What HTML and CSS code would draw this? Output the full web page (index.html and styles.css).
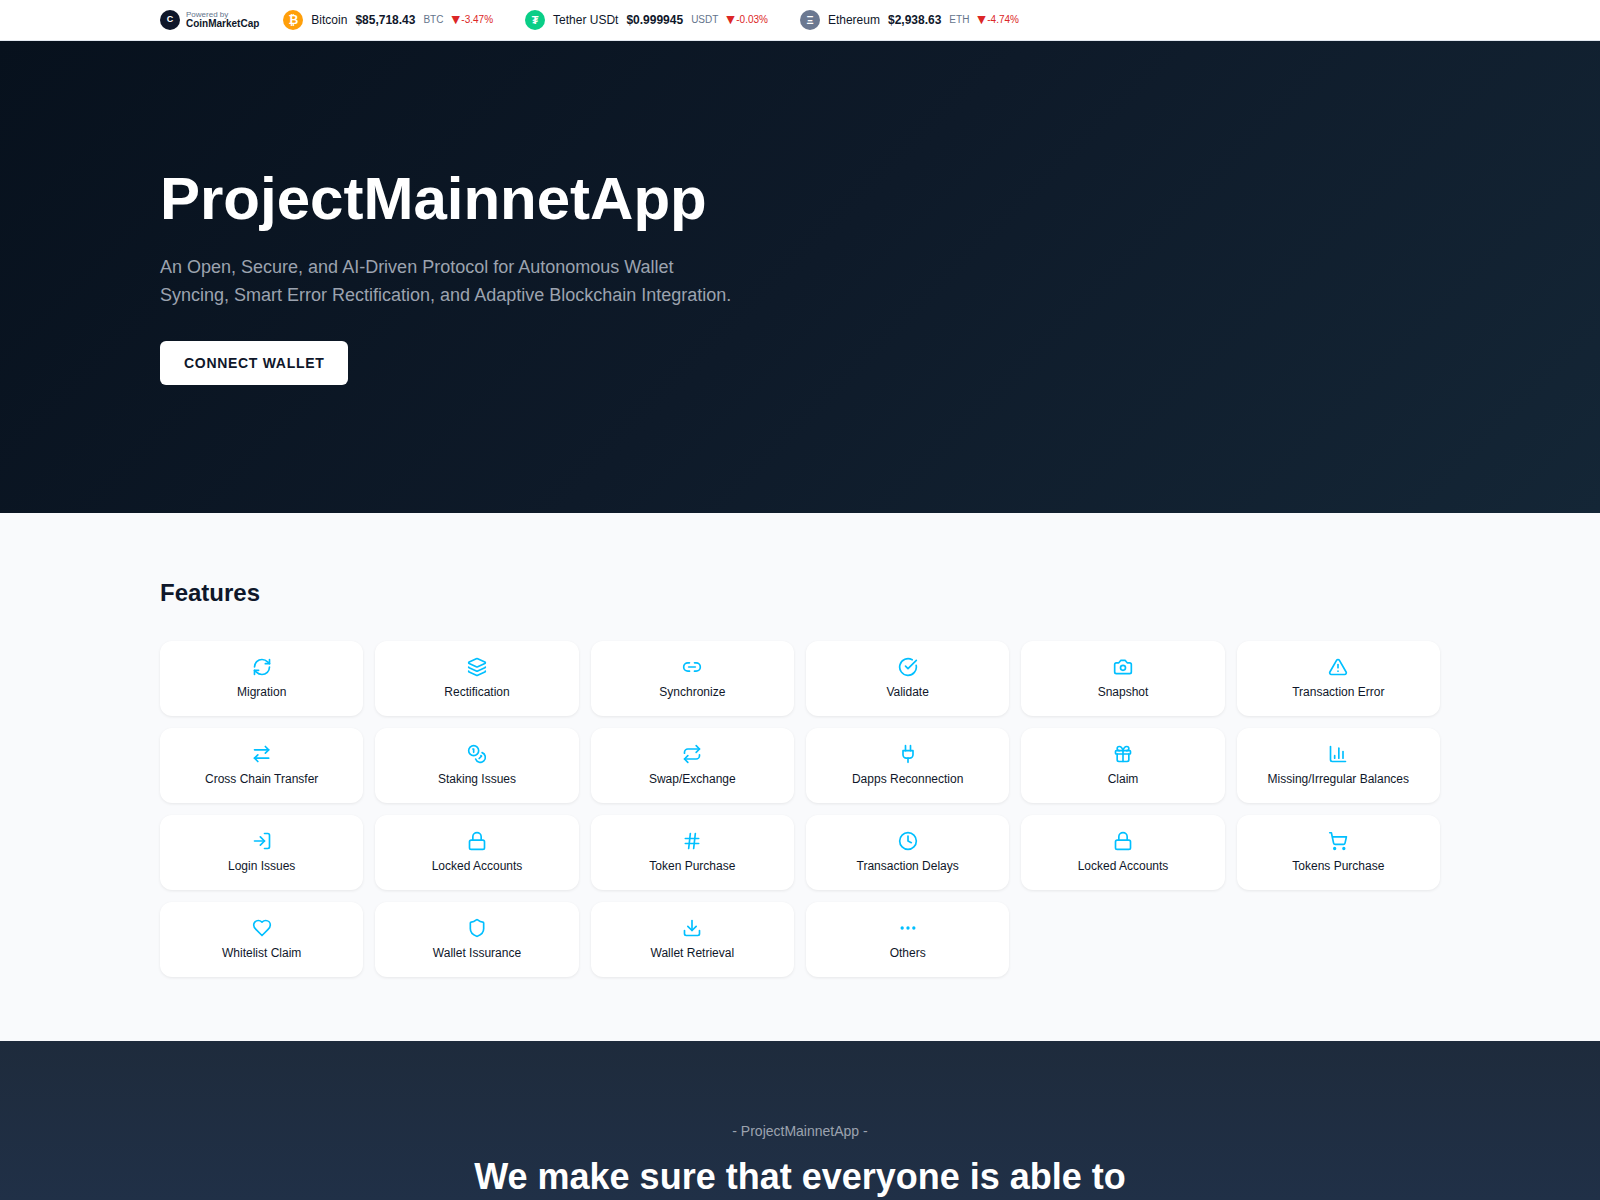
FILE: index.html
```
<!DOCTYPE html>
<html lang="en">
<head>
    <meta charset="UTF-8">
    <meta name="viewport" content="width=device-width, initial-scale=1.0">
    <title>ProjectMainnetApp</title>
    <link rel="stylesheet" href="styles.css">
</head>
<body>
    <div class="ticker">
        <div class="container ticker-inner">
            <div class="powered">
                <span class="coin-icon cmc">C</span>
                <div class="powered-text">
                    <span class="powered-by">Powered by</span>
                    <span class="powered-name">CoinMarketCap</span>
                </div>
            </div>
            <div class="coins">
                <div class="coin">
                    <span class="coin-icon btc">₿</span>
                    <span class="coin-name">Bitcoin</span>
                    <span class="coin-price">$85,718.43</span>
                    <span class="coin-symbol">BTC</span>
                    <span class="coin-change"><span class="arrow">▼</span>-3.47%</span>
                </div>
                <div class="coin">
                    <span class="coin-icon usdt">₮</span>
                    <span class="coin-name">Tether USDt</span>
                    <span class="coin-price">$0.999945</span>
                    <span class="coin-symbol">USDT</span>
                    <span class="coin-change"><span class="arrow">▼</span>-0.03%</span>
                </div>
                <div class="coin">
                    <span class="coin-icon eth">Ξ</span>
                    <span class="coin-name">Ethereum</span>
                    <span class="coin-price">$2,938.63</span>
                    <span class="coin-symbol">ETH</span>
                    <span class="coin-change"><span class="arrow">▼</span>-4.74%</span>
                </div>
            </div>
        </div>
    </div>

    <section class="hero">
        <div class="container">
            <h1>ProjectMainnetApp</h1>
            <p>An Open, Secure, and AI-Driven Protocol for Autonomous Wallet Syncing, Smart Error Rectification, and Adaptive Blockchain Integration.</p>
            <button class="connect-btn">CONNECT WALLET</button>
        </div>
    </section>

    <section class="features">
        <div class="container">
            <h2>Features</h2>
            <div class="features-grid">
                <div class="feature-card">
                    <svg class="icon" viewBox="0 0 24 24"><path d="M3 12a9 9 0 0 1 9-9 9.75 9.75 0 0 1 6.74 2.74L21 8"/><path d="M21 3v5h-5"/><path d="M21 12a9 9 0 0 1-9 9 9.75 9.75 0 0 1-6.74-2.74L3 16"/><path d="M8 16H3v5"/></svg>
                    <span>Migration</span>
                </div>
                <div class="feature-card">
                    <svg class="icon" viewBox="0 0 24 24"><path d="M12.83 2.18a2 2 0 0 0-1.66 0L2.6 6.08a1 1 0 0 0 0 1.83l8.58 3.91a2 2 0 0 0 1.66 0l8.58-3.9a1 1 0 0 0 0-1.83z"/><path d="M2 12a1 1 0 0 0 .58.91l8.6 3.91a2 2 0 0 0 1.65 0l8.58-3.9A1 1 0 0 0 22 12"/><path d="M2 17a1 1 0 0 0 .58.91l8.6 3.91a2 2 0 0 0 1.65 0l8.58-3.9A1 1 0 0 0 22 17"/></svg>
                    <span>Rectification</span>
                </div>
                <div class="feature-card">
                    <svg class="icon" viewBox="0 0 24 24"><path d="M9 17H7A5 5 0 0 1 7 7h2"/><path d="M15 7h2a5 5 0 1 1 0 10h-2"/><path d="M8 12h8"/></svg>
                    <span>Synchronize</span>
                </div>
                <div class="feature-card">
                    <svg class="icon" viewBox="0 0 24 24"><path d="M21.801 10A10 10 0 1 1 17 3.335"/><path d="m9 11 3 3L22 4"/></svg>
                    <span>Validate</span>
                </div>
                <div class="feature-card">
                    <svg class="icon" viewBox="0 0 24 24"><path d="M14.5 4h-5L7 7H4a2 2 0 0 0-2 2v9a2 2 0 0 0 2 2h16a2 2 0 0 0 2-2V9a2 2 0 0 0-2-2h-3l-2.500-3z"/><circle cx="12" cy="13" r="3"/></svg>
                    <span>Snapshot</span>
                </div>
                <div class="feature-card">
                    <svg class="icon" viewBox="0 0 24 24"><path d="m21.730 18-8-14a2 2 0 0 0-3.480 0l-8 14A2 2 0 0 0 4 21h16a2 2 0 0 0 1.730-3"/><path d="M12 9v4"/><path d="M12 17h.01"/></svg>
                    <span>Transaction Error</span>
                </div>
                <div class="feature-card">
                    <svg class="icon" viewBox="0 0 24 24"><path d="m16 3 4 4-4 4"/><path d="M3 7h17"/><path d="m7 21-4-4 4-4"/><path d="M20 17H3"/></svg>
                    <span>Cross Chain Transfer</span>
                </div>
                <div class="feature-card">
                    <svg class="icon" viewBox="0 0 24 24"><circle cx="8" cy="8" r="6"/><path d="M18.090 10.370A6 6 0 1 1 10.340 18"/><path d="M7 6h1v4"/><path d="m16.710 13.880.700.710-2.820 2.820"/></svg>
                    <span>Staking Issues</span>
                </div>
                <div class="feature-card">
                    <svg class="icon" viewBox="0 0 24 24"><path d="m17 2 4 4-4 4"/><path d="M3 11v-1a4 4 0 0 1 4-4h14"/><path d="m7 22-4-4 4-4"/><path d="M21 13v1a4 4 0 0 1-4 4H3"/></svg>
                    <span>Swap/Exchange</span>
                </div>
                <div class="feature-card">
                    <svg class="icon" viewBox="0 0 24 24"><path d="M12 22v-5"/><path d="M9 8V2"/><path d="M15 8V2"/><path d="M18 8v5a4 4 0 0 1-4 4h-4a4 4 0 0 1-4-4V8Z"/></svg>
                    <span>Dapps Reconnection</span>
                </div>
                <div class="feature-card">
                    <svg class="icon" viewBox="0 0 24 24"><rect x="3" y="8" width="18" height="4" rx="1"/><path d="M12 8v13"/><path d="M19 12v7a2 2 0 0 1-2 2H7a2 2 0 0 1-2-2v-7"/><path d="M7.500 8a2.500 2.500 0 0 1 0-5A4.800 8 0 0 1 12 8a4.800 8 0 0 1 4.500-5 2.500 2.500 0 0 1 0 5"/></svg>
                    <span>Claim</span>
                </div>
                <div class="feature-card">
                    <svg class="icon" viewBox="0 0 24 24"><path d="M3 3v16a2 2 0 0 0 2 2h16"/><path d="M18 17V9"/><path d="M13 17V5"/><path d="M8 17v-3"/></svg>
                    <span>Missing/Irregular Balances</span>
                </div>
                <div class="feature-card">
                    <svg class="icon" viewBox="0 0 24 24"><path d="M15 3h4a2 2 0 0 1 2 2v14a2 2 0 0 1-2 2h-4"/><path d="m10 17 5-5-5-5"/><path d="M15 12H3"/></svg>
                    <span>Login Issues</span>
                </div>
                <div class="feature-card">
                    <svg class="icon" viewBox="0 0 24 24"><rect x="3" y="11" width="18" height="11" rx="2"/><path d="M7 11V7a5 5 0 0 1 10 0v4"/></svg>
                    <span>Locked Accounts</span>
                </div>
                <div class="feature-card">
                    <svg class="icon" viewBox="0 0 24 24"><path d="M4 9h16"/><path d="M4 15h16"/><path d="M10 3 8 21"/><path d="m16 3-2 18"/></svg>
                    <span>Token Purchase</span>
                </div>
                <div class="feature-card">
                    <svg class="icon" viewBox="0 0 24 24"><circle cx="12" cy="12" r="10"/><path d="M12 6v6l4 2"/></svg>
                    <span>Transaction Delays</span>
                </div>
                <div class="feature-card">
                    <svg class="icon" viewBox="0 0 24 24"><rect x="3" y="11" width="18" height="11" rx="2"/><path d="M7 11V7a5 5 0 0 1 10 0v4"/></svg>
                    <span>Locked Accounts</span>
                </div>
                <div class="feature-card">
                    <svg class="icon" viewBox="0 0 24 24"><circle cx="8" cy="21" r="1"/><circle cx="19" cy="21" r="1"/><path d="M2.050 2.050h2l2.660 12.420a2 2 0 0 0 2 1.580h9.780a2 2 0 0 0 1.950-1.570l1.650-7.430H5.120"/></svg>
                    <span>Tokens Purchase</span>
                </div>
                <div class="feature-card">
                    <svg class="icon" viewBox="0 0 24 24"><path d="M19 14c1.490-1.460 3-3.210 3-5.500A5.500 5.500 0 0 0 16.500 3c-1.760 0-3 .5-4.500 2-1.500-1.500-2.740-2-4.500-2A5.500 5.500 0 0 0 2 8.500c0 2.300 1.500 4.050 3 5.500l7 7Z"/></svg>
                    <span>Whitelist Claim</span>
                </div>
                <div class="feature-card">
                    <svg class="icon" viewBox="0 0 24 24"><path d="M20 13c0 5-3.500 7.500-7.660 8.950a1 1 0 0 1-.67-.01C7.500 20.500 4 18 4 13V6a1 1 0 0 1 1-1c2 0 4.500-1.200 6.240-2.720a1.170 1.170 0 0 1 1.520 0C14.510 3.810 17 5 19 5a1 1 0 0 1 1 1z"/></svg>
                    <span>Wallet Issurance</span>
                </div>
                <div class="feature-card">
                    <svg class="icon" viewBox="0 0 24 24"><path d="M12 15V3"/><path d="M21 15v4a2 2 0 0 1-2 2H5a2 2 0 0 1-2-2v-4"/><path d="m7 10 5 5 5-5"/></svg>
                    <span>Wallet Retrieval</span>
                </div>
                <div class="feature-card">
                    <svg class="icon" viewBox="0 0 24 24"><circle cx="12" cy="12" r="1"/><circle cx="19" cy="12" r="1"/><circle cx="5" cy="12" r="1"/></svg>
                    <span>Others</span>
                </div>
            </div>
        </div>
    </section>

    <section class="about">
        <p class="about-label">- ProjectMainnetApp -</p>
        <h2>We make sure that everyone is able to</h2>
    </section>
</body>
</html>
```
FILE: styles.css
```
* {
    box-sizing: border-box;
    margin: 0;
    padding: 0;
}

body {
    font-family: Arial, "Liberation Sans", sans-serif;
    color: #0f172a;
    background: #f9fafc;
    height: 100vh;
    overflow: hidden;
}

.container {
    width: 1280px;
    margin: 0 auto;
}

/* Ticker */
.ticker {
    background: #fff;
    border-bottom: 1px solid #e2e8f0;
}

.ticker-inner {
    display: flex;
    align-items: center;
    gap: 24px;
    height: 40px;
}

.powered {
    display: flex;
    align-items: center;
    gap: 6px;
}

.powered-text {
    display: flex;
    flex-direction: column;
}

.powered-by {
    font-size: 8px;
    line-height: 8px;
    color: #64748b;
}

.powered-name {
    font-size: 10px;
    line-height: 10px;
    font-weight: 700;
}

.coins {
    display: flex;
    gap: 32px;
}

.coin {
    display: flex;
    align-items: center;
    gap: 8px;
    font-size: 12px;
    line-height: 16px;
    white-space: nowrap;
}

.coin-icon {
    width: 20px;
    height: 20px;
    border-radius: 50%;
    display: flex;
    align-items: center;
    justify-content: center;
    color: #fff;
    font-size: 11px;
    font-weight: 700;
}

.cmc {
    background: #0f172a;
    font-size: 9px;
    padding-bottom: 2px;
}

.btc {
    background: #ff9f0a;
    font-size: 12px;
}

.usdt {
    background: #0ace87;
}

.eth {
    background: #6b7891;
}

.coin-price {
    font-weight: 700;
}

.coin-symbol {
    font-size: 10px;
    color: #64748b;
}

.coin-change {
    font-size: 10px;
    color: #dc2626;
}

.arrow {
    display: inline-block;
    width: 9.9px;
    font-family: "DejaVu Sans", sans-serif;
    font-size: 11px;
    line-height: 10px;
}

/* Hero */
.hero {
    padding: 128px 0;
    background: linear-gradient(135deg, #07111d 0%, #0e1a29 50%, #142636 100%);
    color: #fff;
}

.hero h1 {
    font-size: 60px;
    line-height: 60px;
    margin-bottom: 24px;
}

.hero p {
    max-width: 576px;
    font-size: 18px;
    line-height: 28px;
    color: #9ca3af;
    margin-bottom: 32px;
}

.connect-btn {
    display: block;
    height: 44px;
    padding: 0 24px;
    border: none;
    border-radius: 6px;
    background: #fff;
    color: #0f172a;
    font-family: inherit;
    font-size: 14px;
    font-weight: 700;
    letter-spacing: 0.7px;
    cursor: pointer;
}

/* Features */
.features {
    padding: 64px 0;
    background: #f9fafc;
}

.features h2 {
    font-size: 24px;
    line-height: 32px;
    margin-bottom: 32px;
}

.features-grid {
    display: grid;
    grid-template-columns: repeat(6, 1fr);
    gap: 12px;
}

.feature-card {
    display: flex;
    flex-direction: column;
    align-items: center;
    gap: 8px;
    padding: 16px;
    border-radius: 12px;
    background: #fff;
    box-shadow: 0 1px 3px rgba(0, 0, 0, 0.08);
    font-size: 12px;
    line-height: 15px;
}

.icon {
    width: 20px;
    height: 20px;
    fill: none;
    stroke: #00bfff;
    stroke-width: 2;
    stroke-linecap: round;
    stroke-linejoin: round;
}

/* About */
.about {
    height: 159px;
    padding-top: 80px;
    overflow: hidden;
    background: linear-gradient(180deg, #1e2b3c 0%, #203047 100%);
    color: #fff;
    text-align: center;
}

.about-label {
    font-size: 14px;
    line-height: 20px;
    color: #9ca3af;
    margin-bottom: 16px;
}

.about h2 {
    font-size: 36px;
    line-height: 40px;
}
```
